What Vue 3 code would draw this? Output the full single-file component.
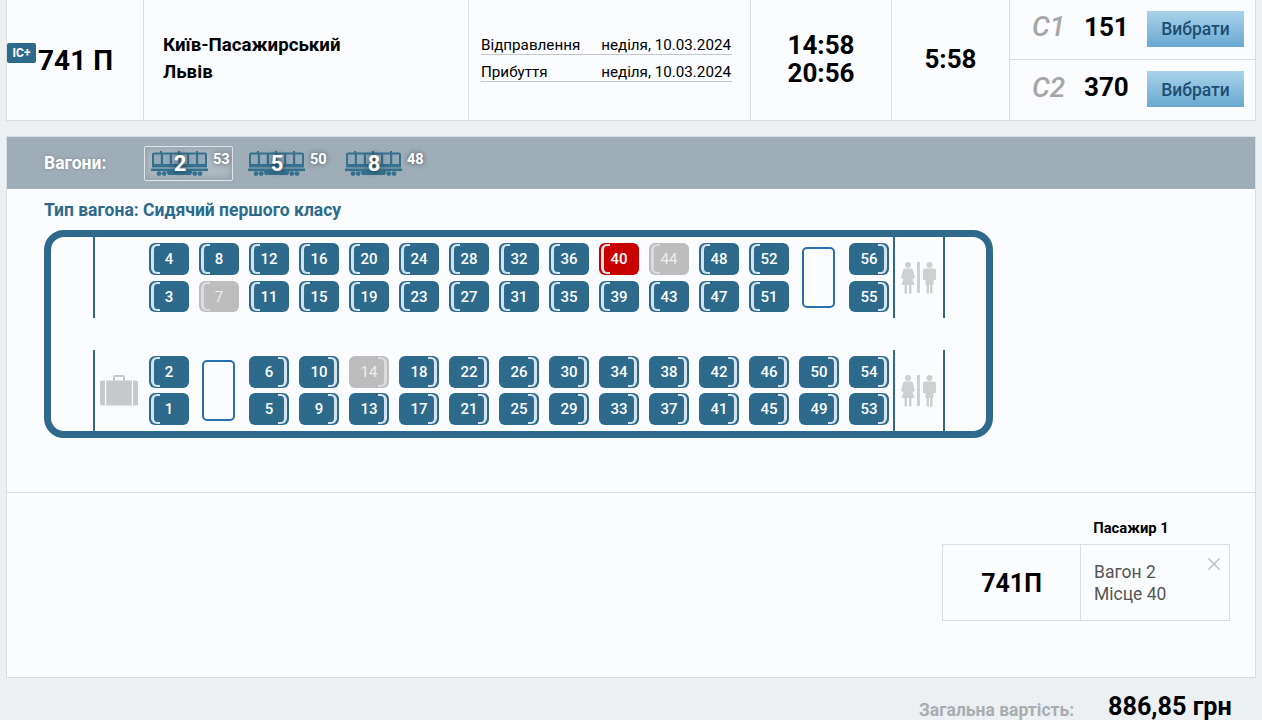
<template>
  <div class="page">
    <div class="card train">
      <div class="cell num-cell">
        <span class="badge">IC+</span>
        <span class="num">741 П</span>
      </div>
      <div class="cell route">
        <div>Київ-Пасажирський</div>
        <div>Львів</div>
      </div>
      <div class="cell dates">
        <div class="date-row"><span>Відправлення</span><span>неділя, 10.03.2024</span></div>
        <div class="date-row"><span>Прибуття</span><span>неділя, 10.03.2024</span></div>
      </div>
      <div class="cell times">
        <div>14:58</div>
        <div>20:56</div>
      </div>
      <div class="cell duration">5:58</div>
      <div class="classes">
        <div v-for="c in classes" :key="c.name" class="class-row">
          <span class="class-name">{{ c.name }}</span>
          <span class="class-count">{{ c.count }}</span>
          <button class="pick">Вибрати</button>
        </div>
      </div>
    </div>

    <div class="card wagon-card">
      <div class="wagon-bar">
        <span class="bar-label">Вагони:</span>
        <div class="wagons">
          <div v-for="w in wagons" :key="w.no" class="wagon-item" :class="{ active: w.active }">
            <svg class="wagon-icon" width="57" height="26" viewBox="0 0 57 26">
              <g fill="#35708f">
                <path d="M1 3.5 Q1 1.5 3 1.5 H9 V0 H11 V1.5 H27 V0 H29 V1.5 H45 V0 H47 V1.5 H54 Q56 1.5 56 3.5 V16.5 H1 Z" />
                <rect x="0" y="17.5" width="57" height="2.6" />
                <path d="M15 19 H42 L40 24 H17 Z" />
                <circle cx="8" cy="22.6" r="2.4" />
                <circle cx="13.2" cy="22.6" r="2.4" />
                <circle cx="43.8" cy="22.6" r="2.4" />
                <circle cx="49" cy="22.6" r="2.4" />
              </g>
              <g fill="#94a9b8">
                <rect x="3" y="3.5" width="6.8" height="9.5" />
                <rect x="12" y="3.5" width="6.8" height="9.5" />
                <rect x="21" y="3.5" width="6.5" height="9.5" />
                <rect x="29.5" y="3.5" width="6.5" height="9.5" />
                <rect x="38.2" y="3.5" width="6.8" height="9.5" />
                <rect x="47.2" y="3.5" width="6.8" height="9.5" />
              </g>
            </svg>
            <span class="wagon-no">{{ w.no }}</span>
            <span class="wagon-free">{{ w.free }}</span>
          </div>
        </div>
      </div>

      <div class="wagon-type">Тип вагона: Сидячий першого класу</div>

      <div class="plan">
        <div class="half">
          <div class="end"></div>
          <div class="luggage"></div>
          <div class="seats top">
            <template v-for="s in topSeats" :key="s.key">
              <div v-if="s.empty" class="gap-seat"></div>
              <div v-else class="seat" :class="[s.side, s.state]">{{ s.no }}</div>
            </template>
          </div>
          <div class="wc">
            <svg width="36" height="32" viewBox="0 0 36 32" fill="#cdcfd0">
              <circle cx="7" cy="3" r="3" />
              <path d="M4 6.5 H10 Q11.5 6.5 12 8 L14 16 L11.6 17 L13.5 23 H10.5 V31.5 H8 V23 H6 V31.5 H3.5 V23 H0.5 L2.4 17 L0 16 L2 8 Q2.5 6.5 4 6.5 Z" />
              <rect x="16" y="0" width="3" height="31" />
              <circle cx="28.5" cy="3" r="3" />
              <path d="M24 6.5 H33 Q35 6.5 35 8.5 V18 H32.5 V23 H31.5 V31.5 H29 V23 H28 V31.5 H25.5 V23 H24.5 V18 H22 V8.5 Q22 6.5 24 6.5 Z" />
            </svg>
          </div>
        </div>
        <div class="half lower">
          <div class="end"></div>
          <div class="luggage">
            <svg width="38" height="31" viewBox="0 0 38 31" fill="#c6c8ca">
              <path d="M13 6 V2 Q13 0 15 0 H23 Q25 0 25 2 V6 H23 V2 H15 V6 Z" />
              <path d="M2 5.5 H5 V30.5 H2 Q0 30.5 0 28.5 V7.5 Q0 5.5 2 5.5 Z" />
              <rect x="6.2" y="5.5" width="25.6" height="25" />
              <path d="M33 5.5 H36 Q38 5.5 38 7.5 V28.5 Q38 30.5 36 30.5 H33 Z" />
            </svg>
          </div>
          <div class="seats bottom">
            <template v-for="s in bottomSeats" :key="s.key">
              <div v-if="s.empty" class="gap-seat"></div>
              <div v-else class="seat" :class="[s.side, s.state]">{{ s.no }}</div>
            </template>
          </div>
          <div class="wc">
            <svg width="36" height="32" viewBox="0 0 36 32" fill="#cdcfd0">
              <circle cx="7" cy="3" r="3" />
              <path d="M4 6.5 H10 Q11.5 6.5 12 8 L14 16 L11.6 17 L13.5 23 H10.5 V31.5 H8 V23 H6 V31.5 H3.5 V23 H0.5 L2.4 17 L0 16 L2 8 Q2.5 6.5 4 6.5 Z" />
              <rect x="16" y="0" width="3" height="31" />
              <circle cx="28.5" cy="3" r="3" />
              <path d="M24 6.5 H33 Q35 6.5 35 8.5 V18 H32.5 V23 H31.5 V31.5 H29 V23 H28 V31.5 H25.5 V23 H24.5 V18 H22 V8.5 Q22 6.5 24 6.5 Z" />
            </svg>
          </div>
        </div>
      </div>

      <div class="passengers">
        <div class="passenger">
          <div class="passenger-title">Пасажир 1</div>
          <div class="ticket">
            <div class="ticket-train">741П</div>
            <div class="ticket-info">
              <div>Вагон 2</div>
              <div>Місце 40</div>
              <svg class="ticket-close" width="12" height="12" viewBox="0 0 12 12">
                <path d="M0.5 0.5 L11.5 11.5 M11.5 0.5 L0.5 11.5" stroke="#b9bcbf" stroke-width="1.3" fill="none" />
              </svg>
            </div>
          </div>
        </div>
      </div>
    </div>

    <div class="total">
      <span class="total-label">Загальна вартість:</span>
      <span class="total-sum">886,85 грн</span>
    </div>
  </div>
</template>

<script setup>
const classes = [
  { name: 'С1', count: 151 },
  { name: 'С2', count: 370 }
]

const wagons = [
  { no: 2, free: 53, active: true },
  { no: 5, free: 50 },
  { no: 8, free: 48 }
]

const taken = [7, 14, 44]

// місця йдуть по колонках, null - порожнє місце в ряду
const buildSeats = (upper, lower, rightFrom) => {
  const out = []
  const push = (no, i) => {
    if (no === null) {
      if (i === 0) out.push({ key: 'gap' + out.length, empty: true })
      return
    }
    out.push({
      key: no,
      no,
      side: rightFrom(no) ? 'right' : 'left',
      state: no === 40 ? 'picked' : taken.includes(no) ? 'taken' : ''
    })
  }
  upper.forEach((no, col) => {
    push(no, 0)
    push(lower[col], 1)
  })
  return out
}

const topSeats = buildSeats(
  [4, 8, 12, 16, 20, 24, 28, 32, 36, 40, 44, 48, 52, null, 56],
  [3, 7, 11, 15, 19, 23, 27, 31, 35, 39, 43, 47, 51, null, 55],
  no => no >= 55
)

const bottomSeats = buildSeats(
  [2, null, 6, 10, 14, 18, 22, 26, 30, 34, 38, 42, 46, 50, 54],
  [1, null, 5, 9, 13, 17, 21, 25, 29, 33, 37, 41, 45, 49, 53],
  no => no >= 5
)
</script>

<style>
html, body {
  margin: 0;
  overflow: hidden;
  background: #ecf0f3;
}
</style>

<style scoped>
.page {
  height: 720px;
  overflow: hidden;
  padding: 0 6px;
  font-family: Roboto, "Liberation Sans", sans-serif;
  color: #000;
  box-sizing: border-box;
}

.card {
  background: #fafcff;
  border: 1px solid #d8dde2;
  box-sizing: border-box;
}

.train {
  display: flex;
  height: 121px;
  border-top: none;
}

.cell {
  border-right: 1px solid #d8dde2;
  box-sizing: border-box;
  flex: none;
}

.num-cell {
  width: 137px;
  display: flex;
  align-items: center;
}

.badge {
  width: 29px;
  height: 20px;
  margin-top: -14px;
  background: #2d6a8c;
  color: #fff;
  font-size: 12px;
  font-weight: 700;
  line-height: 20px;
  text-align: center;
  border-radius: 2px;
  flex: none;
}

.num {
  margin-left: 2px;
  font-size: 28px;
  font-weight: 700;
  white-space: nowrap;
}

.route {
  width: 325px;
  padding: 32px 0 0 19px;
  font-size: 18.7px;
  font-weight: 700;
  line-height: 27px;
}

.dates {
  width: 282px;
  padding: 37px 18px 0 12px;
  font-size: 15.2px;
}

.date-row {
  display: flex;
  justify-content: space-between;
  height: 18px;
  line-height: 17px;
  border-bottom: 1px solid #c4c8cc;
  box-sizing: border-box;
  margin-bottom: 9px;
  padding-right: 1px;
}

.times {
  width: 141px;
  padding-top: 31px;
  font-size: 26px;
  font-weight: 700;
  line-height: 28px;
  text-align: center;
}

.duration {
  width: 118px;
  font-size: 26px;
  font-weight: 700;
  line-height: 118px;
  text-align: center;
}

.classes {
  flex: 1;
}

.class-row {
  display: flex;
  align-items: center;
  height: 60px;
  box-sizing: border-box;
  padding-left: 22px;
  padding-bottom: 2px;
}

.class-row:first-child {
  border-bottom: 1px solid #d8dde2;
}

.class-name {
  width: 52px;
  margin-bottom: 4px;
  font-size: 28px;
  font-style: italic;
  font-weight: 500;
  color: #a6a6a6;
}

.class-count {
  width: 63px;
  margin-bottom: 4px;
  font-size: 26px;
  font-weight: 700;
}

.pick {
  width: 97px;
  height: 36px;
  padding: 1px 0 0;
  border: none;
  background: linear-gradient(#a9d3ea, #69a8d0);
  color: #1d4f75;
  font-family: Roboto, "Liberation Sans", sans-serif;
  font-size: 17.5px;
  font-weight: 500;
}

.wagon-card {
  height: 542px;
  margin-top: 15px;
}

.wagon-bar {
  display: flex;
  align-items: center;
  height: 52px;
  background: #9fadb7;
  color: #fff;
}

.bar-label {
  width: 100px;
  margin-left: 37px;
  font-size: 17.5px;
  font-weight: 700;
  text-shadow: 0 0 3px rgba(60, 70, 80, 0.4);
}

.wagons {
  display: flex;
  gap: 8px;
}

.wagon-item {
  position: relative;
  width: 89px;
  height: 35px;
  box-sizing: border-box;
  border: 1px solid transparent;
  border-radius: 2px;
}

.wagon-item.active {
  border-color: #dfe6ea;
  background: #aebac2;
  box-shadow: inset 0 0 8px rgba(70, 85, 95, 0.35);
}

.wagon-icon {
  position: absolute;
  left: 6px;
  top: 4px;
}

.wagon-no {
  position: absolute;
  left: 25px;
  top: 4px;
  width: 20px;
  font-size: 22px;
  font-weight: 700;
  line-height: 26px;
  text-align: center;
  text-shadow: 0 0 6px rgba(20, 30, 40, 0.8);
}

.wagon-free {
  position: absolute;
  left: 68px;
  top: 4px;
  font-size: 14.5px;
  font-weight: 700;
  line-height: 17px;
  text-shadow: 0 0 5px rgba(30, 40, 50, 0.7);
}

.wagon-type {
  margin: 11px 0 0 37px;
  height: 20px;
  color: #2d6a8c;
  font-size: 17.5px;
  font-weight: 700;
  line-height: 20px;
}

.plan {
  width: 949px;
  height: 208px;
  margin: 10px 0 0 37px;
  border: 7px solid #2f6a8c;
  border-radius: 20px;
  box-sizing: border-box;
  display: flex;
  flex-direction: column;
  justify-content: space-between;
}

.half {
  display: flex;
  height: 81px;
}

.end {
  width: 44px;
  flex: none;
  box-sizing: border-box;
  border-right: 2px solid #2f6a8c;
}

.luggage {
  width: 54px;
  flex: none;
  display: flex;
  align-items: flex-end;
  justify-content: center;
  padding-bottom: 25px;
  padding-right: 6px;
  box-sizing: border-box;
}

.seats {
  display: grid;
  grid-template-rows: 32px 31px;
  grid-auto-flow: column;
  grid-auto-columns: 40px;
  column-gap: 10px;
  row-gap: 6px;
  width: 740px;
  flex: none;
  margin-top: 6px;
}

.seats.bottom {
  row-gap: 5px;
  grid-template-rows: 32px 32px;
}

.seat {
  position: relative;
  background: #2d6a8c;
  border-radius: 6px;
  color: #fff;
  font-size: 15px;
  font-weight: 500;
  display: flex;
  align-items: center;
  justify-content: center;
}

/* скобка спинки крісла */
.seat::before {
  content: "";
  position: absolute;
  top: 1px;
  bottom: 1px;
  width: 6px;
  border: 2px solid #d3e2ec;
}

.seat.left::before {
  left: 2px;
  border-left-width: 3px;
  border-right: none;
  border-radius: 6px 0 0 6px;
}

.seat.right::before {
  right: 2px;
  border-right-width: 3px;
  border-left: none;
  border-radius: 0 6px 6px 0;
}

.seat.taken {
  background: #bdbdbd;
  font-weight: 400;
  color: #ececec;
}

.seat.taken::before {
  border-color: #dcdcdc;
}

.seat.picked {
  background: #c90000;
}

.gap-seat {
  grid-row: span 2;
  width: 33px;
  height: 61px;
  margin: 4px 0 0 3px;
  border: 2px solid #2a6fb0;
  border-radius: 5px;
  box-sizing: border-box;
}

.wc {
  width: 52px;
  margin-left: 4px;
  flex: none;
  box-sizing: border-box;
  border-left: 2px solid #2f6a8c;
  border-right: 2px solid #2f6a8c;
  display: flex;
  justify-content: center;
  padding-top: 25px;
}

.passengers {
  margin-top: 54px;
  height: 186px;
  border-top: 1px solid #d8dde2;
  display: flex;
  justify-content: flex-end;
  padding: 27px 25px 0 0;
  box-sizing: border-box;
}

.passenger {
  width: 288px;
}

.passenger-title {
  padding-left: 90px;
  font-size: 14.8px;
  font-weight: 700;
  line-height: 17px;
  text-align: center;
  margin-bottom: 7px;
}

.ticket {
  display: flex;
  height: 77px;
  border: 1px solid #d8dde2;
  box-sizing: border-box;
}

.ticket-train {
  width: 138px;
  border-right: 1px solid #d8dde2;
  box-sizing: border-box;
  font-size: 25px;
  font-weight: 700;
  line-height: 77px;
  text-align: center;
}

.ticket-info {
  position: relative;
  flex: 1;
  padding: 16px 0 0 13px;
  font-size: 17.5px;
  line-height: 22px;
  color: #555;
}

.ticket-close {
  position: absolute;
  top: 13px;
  right: 9px;
}

.total {
  display: flex;
  align-items: flex-start;
  padding-left: 913px;
  margin-top: 17px;
}

.total-label {
  width: 189px;
  margin-top: 6px;
  font-size: 17.5px;
  line-height: 18px;
  font-weight: 700;
  color: #a9adb0;
}

.total-sum {
  font-size: 25.2px;
  line-height: 24px;
  font-weight: 700;
}
</style>
